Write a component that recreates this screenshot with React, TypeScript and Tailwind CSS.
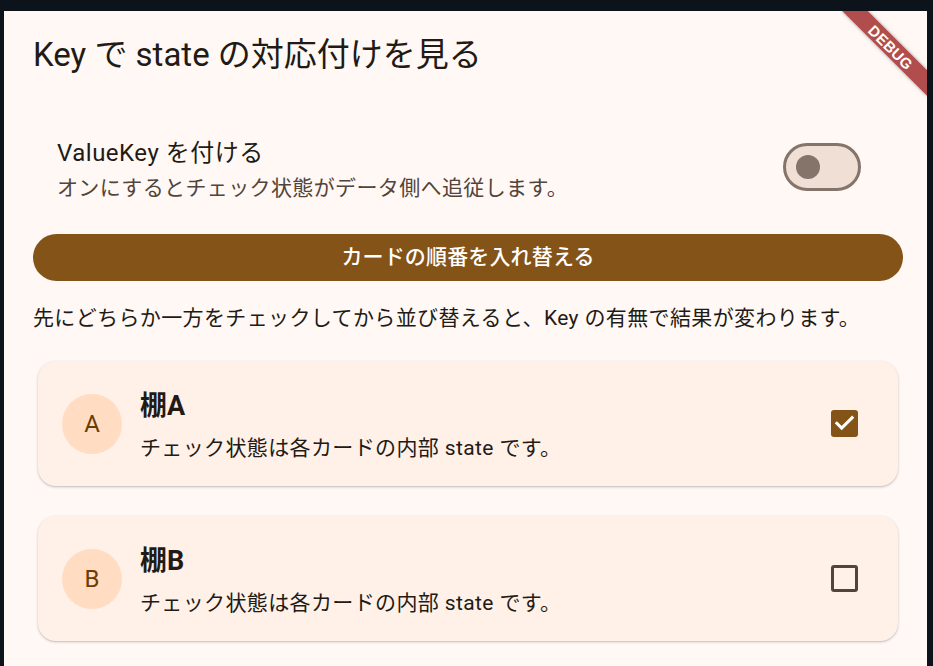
import { useState } from "react"

const FONT = "font-['Roboto','Noto_Sans_CJK_JP',sans-serif]"

const Check = () => (
  <svg className="h-[27px] w-[27px]" viewBox="0 0 24 24" fill="none">
    <path d="M5.2 11.8l4.3 4.3 9.3-9.3" stroke="white" strokeWidth={2.7} strokeLinecap="square" />
  </svg>
)

function ShelfCard({ letter, checked }: { letter: string; checked: boolean }) {
  return (
    <div className="mx-[5px] flex h-[125px] items-center rounded-[18px] bg-[#fff0e8] pl-[24px] pr-[40px] shadow-[0_1px_3px_rgba(0,0,0,0.2),0_1px_1px_rgba(0,0,0,0.06)]">
      <div className="flex h-[60px] w-[60px] shrink-0 items-center justify-center rounded-full bg-[#ffdcc2] text-[24px] text-[#6b3c04]">
        {letter}
      </div>
      <div className="ml-[18px] flex-1 pt-[4px]">
        <div className="text-[27px] font-bold leading-[34px] text-[#221a14]">棚{letter}</div>
        <div className="mt-[10px] text-[21px] leading-[30px] tracking-[0.375px] text-[#221a14]">
          チェック状態は各カードの内部 state です。
        </div>
      </div>
      {checked ? (
        <div className="flex h-[27px] w-[27px] items-center justify-center rounded-[3px] bg-[#845318]">
          <Check />
        </div>
      ) : (
        <div className="h-[27px] w-[27px] rounded-[3px] border-[3px] border-[#52443c]" />
      )}
    </div>
  )
}

export default function App() {
  const [useKey, setUseKey] = useState(false)

  return (
    <div className={`h-screen w-full overflow-hidden bg-[#0c131b] pl-[4px] pr-[6px] pt-[11px] ${FONT}`}>
      <div className="relative h-full overflow-hidden bg-[#fff8f5]">
        {/* App bar */}
        <header className="flex h-[84px] items-center pl-[29px] pt-[3px] text-[33px] leading-[40px] text-[#221a14]">
          Key で state の対応付けを見る
        </header>

        <main className="pl-[29px] pr-[24px] pt-[43px]">
          {/* Switch tile */}
          <div className="flex items-center pl-[24px] pr-[42px]">
            <div className="flex-1">
              <div className="text-[24px] leading-[30px] tracking-[0.5px] text-[#221a14]">ValueKey を付ける</div>
              <div className="mt-[5px] text-[21px] leading-[30px] tracking-[0.375px] text-[#51443b]">
                オンにするとチェック状態がデータ側へ追従します。
              </div>
            </div>
            <button
              onClick={() => setUseKey(!useKey)}
              className="mb-[8px] flex h-[48px] w-[78px] items-center rounded-full border-[3px] border-[#84746a] bg-[#f0dfd5] pl-[10px]"
            >
              <span className="h-[24px] w-[24px] rounded-full bg-[#84746a]" />
            </button>
          </div>

          <button className="mt-[31px] flex h-[47px] w-full items-center justify-center rounded-full bg-[#845318] text-[21px] font-medium tracking-[0.15px] text-white">
            カードの順番を入れ替える
          </button>

          <p className="mt-[22px] text-[21px] leading-[30px] tracking-[0.375px] text-[#221a14]">
            先にどちらか一方をチェックしてから並び替えると、Key の有無で結果が変わります。
          </p>

          <div className="mt-[28px]">
            <ShelfCard letter="A" checked />
          </div>
          <div className="mt-[30px]">
            <ShelfCard letter="B" checked={false} />
          </div>
        </main>

        {/* Debug banner */}
        <div className="pointer-events-none absolute right-0 top-0 h-[100px] w-[100px] overflow-hidden">
          <div className="absolute left-[4px] top-[27px] flex h-[18px] w-[120px] rotate-45 items-center justify-center bg-[#b24d4d] shadow-[0_0_4px_rgba(0,0,0,0.35)]">
            <span className="font-['Liberation_Sans',sans-serif] text-[15px] font-bold leading-none tracking-[0.3px] text-white">
              DEBUG
            </span>
          </div>
        </div>
      </div>
    </div>
  )
}
